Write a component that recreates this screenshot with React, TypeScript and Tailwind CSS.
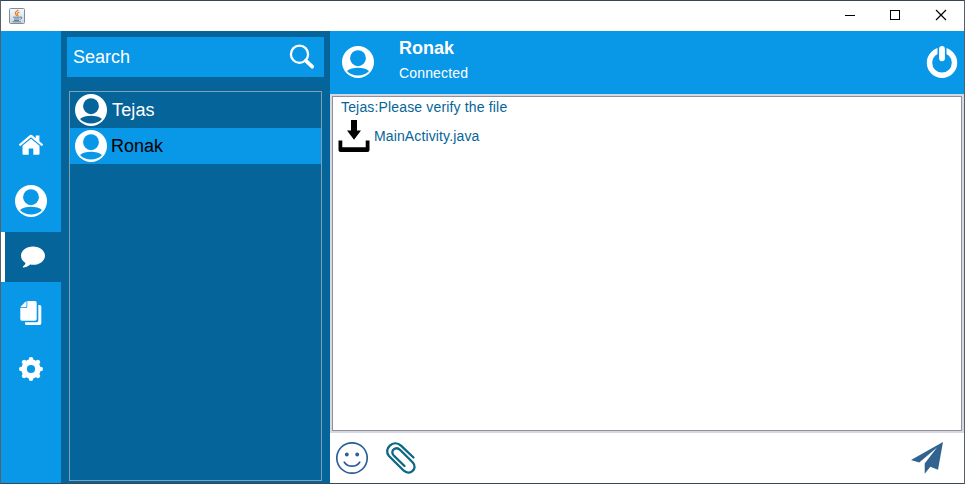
import React from 'react';

function UserIcon({ hole }: { hole: string }) {
  return (
    <svg width="32" height="32" viewBox="0 0 32 32" className="block shrink-0">
      <circle cx="16" cy="16" r="16" fill="#fff" />
      <ellipse cx="16" cy="12.2" rx="7.900" ry="8" fill={hole} />
      <path d="M5 25C7.500 22.700 11.500 21.700 16 21.700S24.500 22.700 27 25C24.500 28 20.500 29.400 16 29.400S7.500 28 5 25Z" fill={hole} />
    </svg>
  );
}

function JavaIcon() {
  return (
    <svg width="16" height="16" viewBox="0 0 16 16" className="block">
      <defs>
        <linearGradient id="cup" x1="0" y1="0" x2="0" y2="1">
          <stop offset="0" stopColor="#f7f9fb" />
          <stop offset="1" stopColor="#cbd6e0" />
        </linearGradient>
      </defs>
      <rect x=".5" y=".5" width="15" height="15" rx="1" fill="url(#cup)" stroke="#7d8f9f" />
      <path d="M9.500 2Q6 4 6.400 5.300T7.700 8M10.500 4Q7.500 5 8.500 6.300T8.600 8.400" fill="none" stroke="#e8801f" strokeWidth="1.200" />
      <path d="M4 9.200h7M5 11h5M5 12.500h5M11 9q2.500-.4 1.700 1T10.500 11.300M3.500 13.800h8.500" fill="none" stroke="#5b83a3" strokeWidth="1" />
    </svg>
  );
}

function NavItem({ children, active }: { children: React.ReactNode; active?: boolean }) {
  return (
    <div className={active ? 'flex h-[50px] items-center border-l-4 border-white bg-[#056499] pl-3' : 'flex h-[50px] items-center justify-center'}>
      {children}
    </div>
  );
}

function Sidebar() {
  return (
    <nav className="flex w-[60px] shrink-0 flex-col gap-1.5 bg-[#0997e8] pt-[89px]">
      <NavItem>
        <svg width="26" height="24" viewBox="0 0 26 24" fill="#fff">
          <path d="M.8 11.500 11.700 2.300Q13 1.300 14.300 2.300L17.700 5.200V2.500H21.400V8.300L25.200 11.500 23.900 13.300 13 4.300 2.100 13.300Z" />
          <path d="M4.500 12.800 13 5.800 21.500 12.800V20.900Q21.500 21.700 20.700 21.700H15.300V15.500H10.700V21.700H5.300Q4.500 21.700 4.500 20.900Z" />
        </svg>
      </NavItem>
      <NavItem><UserIcon hole="#0997e8" /></NavItem>
      <NavItem active>
        <svg width="32" height="32" viewBox="0 0 32 32" fill="#fff">
          <path d="M16 5.500C22.800 5.500 28 9.700 28 14.700S22.800 23.800 16 23.800Q14.500 23.800 13.200 23.600C11 25.700 8.500 26.400 6.300 26.400 5.700 26.400 5.600 25.700 6.200 25.300Q8.300 23.700 8.500 22C5.800 20.300 4 17.700 4 14.700 4 9.700 9.200 5.500 16 5.500Z" />
        </svg>
      </NavItem>
      <NavItem>
        <svg width="24" height="26" viewBox="0 0 24 26" fill="#fff">
          <path d="M8.300 1H16Q17.700 1 17.700 2.700V19Q17.700 20.700 16 20.700H2.800Q1.300 20.700 1.300 19V8.100H6.700Q8.300 8.100 8.300 6.500Z" />
          <path d="M7.500 1.300V5.900Q7.500 7.300 6.200 7.300H1.500Q2 6.200 2.700 5.500L5.400 2.700Q6.300 1.800 7.500 1.300ZM19.300 5H20.500Q22.300 5 22.300 6.700V23.300Q22.300 25 20.600 25H7.500Q6 25 6 23.500V22.300H17.500Q19.300 22.300 19.300 20.500Z" />
        </svg>
      </NavItem>
      <NavItem>
        <svg width="24" height="24" viewBox="0 0 24 24" fill="none" stroke="#fff">
          <circle cx="12" cy="12" r="6.900" strokeWidth="5.600" />
          <path d="M12 4V2.300M12 21.700V20M4 12H2.300M21.700 12H20M6 6 5.100 5.100M18 6 18.900 5.100M6 18 5.100 18.900M18 18 18.900 18.900" strokeWidth="4.600" strokeLinecap="round" />
        </svg>
      </NavItem>
    </nav>
  );
}

function Contacts() {
  return (
    <section className="flex w-[269px] shrink-0 flex-col bg-[#056499] pt-1.5 pb-[2px] text-[18px]">
      <div className="mx-1.5 flex h-10 items-center justify-between bg-[#0997e8] pr-[9px] pl-[6px] text-white">
        <span>Search</span>
        <svg width="26" height="26" viewBox="0 0 26 26" fill="none" stroke="#fff" strokeLinecap="round">
          <circle cx="10.500" cy="10.200" r="8.600" strokeWidth="2.300" />
          <path d="M16.800 16.600 23.200 22.700" strokeWidth="3.700" />
        </svg>
      </div>
      <ul className="mt-3.5 ml-2 mr-2 flex-1 border border-[#82a0b5]">
        <li className="flex h-9 items-center gap-[5px] pl-[5px] tracking-[0.15px] text-white"><UserIcon hole="#056499" />Tejas</li>
        <li className="flex h-9 items-center gap-1 bg-[#0997e8] pl-[5px] text-black"><UserIcon hole="#0997e8" />Ronak</li>
      </ul>
    </section>
  );
}

function Chat() {
  return (
    <main className="flex min-w-0 flex-1 flex-col bg-white">
      <header className="flex h-[63px] shrink-0 items-center bg-[#0997e8] pr-1.5 pb-[2px] pl-3 text-white">
        <UserIcon hole="#0997e8" />
        <div className="ml-[25px] flex-1 pb-1">
          <div className="text-[18px] leading-6 font-bold">Ronak</div>
          <div className="pt-[3px] text-[14px] leading-5 tracking-[0.15px]">Connected</div>
        </div>
        <svg width="32" height="32" viewBox="0 0 32 32" fill="none" stroke="#fff">
          <circle cx="16" cy="16.800" r="12.500" strokeWidth="5.400" />
          <path d="M16 0V13" stroke="#0997e8" strokeWidth="9" />
          <path d="M16 2.900V12.300" strokeWidth="5.800" strokeLinecap="round" />
        </svg>
      </header>
      <div className="h-[339px] shrink-0 border-2 border-[#d5d8e2]">
        <div className="h-full border border-[#8f909f] pl-[5px] text-[14px] text-[#056499]">
          <p className="pl-[3px] leading-5 tracking-[0.16px]">Tejas:Please verify the file</p>
          <div className="mt-[3px] flex items-center gap-1 tracking-[0.13px]">
            <svg width="32" height="32" viewBox="0 0 32 32">
              <path d="M13 0H19V10.600H23L16 19.700 9 10.600H13Z" />
              <path d="M.5 20.600H4.300V27.300H27.700V20.600H31.500V30Q31.500 32 29.500 32H2.500Q.5 32 .5 30Z" />
            </svg>
            MainActivity.java
          </div>
        </div>
      </div>
      <footer className="flex flex-1 items-center pr-[21px] pl-1.5">
        <svg width="32" height="32" viewBox="0 0 32 32" fill="none" stroke="#2b5f98">
          <circle cx="16" cy="16" r="15.200" strokeWidth="1.700" />
          <path d="M8.300 20.200Q11 24.200 16 24.200T23.700 20.200" strokeWidth="1.700" strokeLinecap="round" />
          <circle cx="10.800" cy="12.500" r="1.900" fill="#2b5f98" stroke="none" />
          <circle cx="21.200" cy="12.500" r="1.900" fill="#2b5f98" stroke="none" />
        </svg>
        <svg width="32" height="32" viewBox="0 0 32 32" fill="none" stroke="#0b6784" strokeWidth="2.300" strokeLinecap="round" className="ml-[17px]">
          <path d="M28.500 15.500 16 3.700C8.500-3.300-2.200 6.800 4 14L18.800 28.700C24.800 34 33.300 26.500 27.800 20.500L15.500 8.300C10.500 3.500 4.600 9.200 8.700 13.500L19.500 24" />
        </svg>
        <svg width="32" height="32" viewBox="0 0 32 32" className="ml-auto" fill="#31638e">
          <path d="M32 0 0 17.900 8.200 20.500 26 5.500 13.700 21.500V31.700L19.300 24.800 27 27.800Z" />
        </svg>
      </footer>
    </main>
  );
}

export default function App() {
  return (
    <div className="flex h-[484px] w-[965px] flex-col overflow-hidden border border-t-[#30465d] border-r-[#53606d] border-b-[#34495a] border-l-[#55616b] bg-white font-['Liberation_Sans',Arial,sans-serif]">
      <div className="flex h-[30px] shrink-0 items-center pr-[17px] pl-2">
        <JavaIcon />
        <svg width="102" height="12" viewBox="0 0 102 12" className="-mt-[2px] ml-auto" fill="none" stroke="#000" shapeRendering="crispEdges">
          <path d="M0 6.500H10" />
          <rect x="45.500" y="1.500" width="9" height="9" />
          <path d="M91 1 101 11M101 1 91 11" shapeRendering="auto" strokeWidth="1.200" />
        </svg>
      </div>
      <div className="flex min-h-0 flex-1">
        <Sidebar />
        <Contacts />
        <Chat />
      </div>
    </div>
  );
}
